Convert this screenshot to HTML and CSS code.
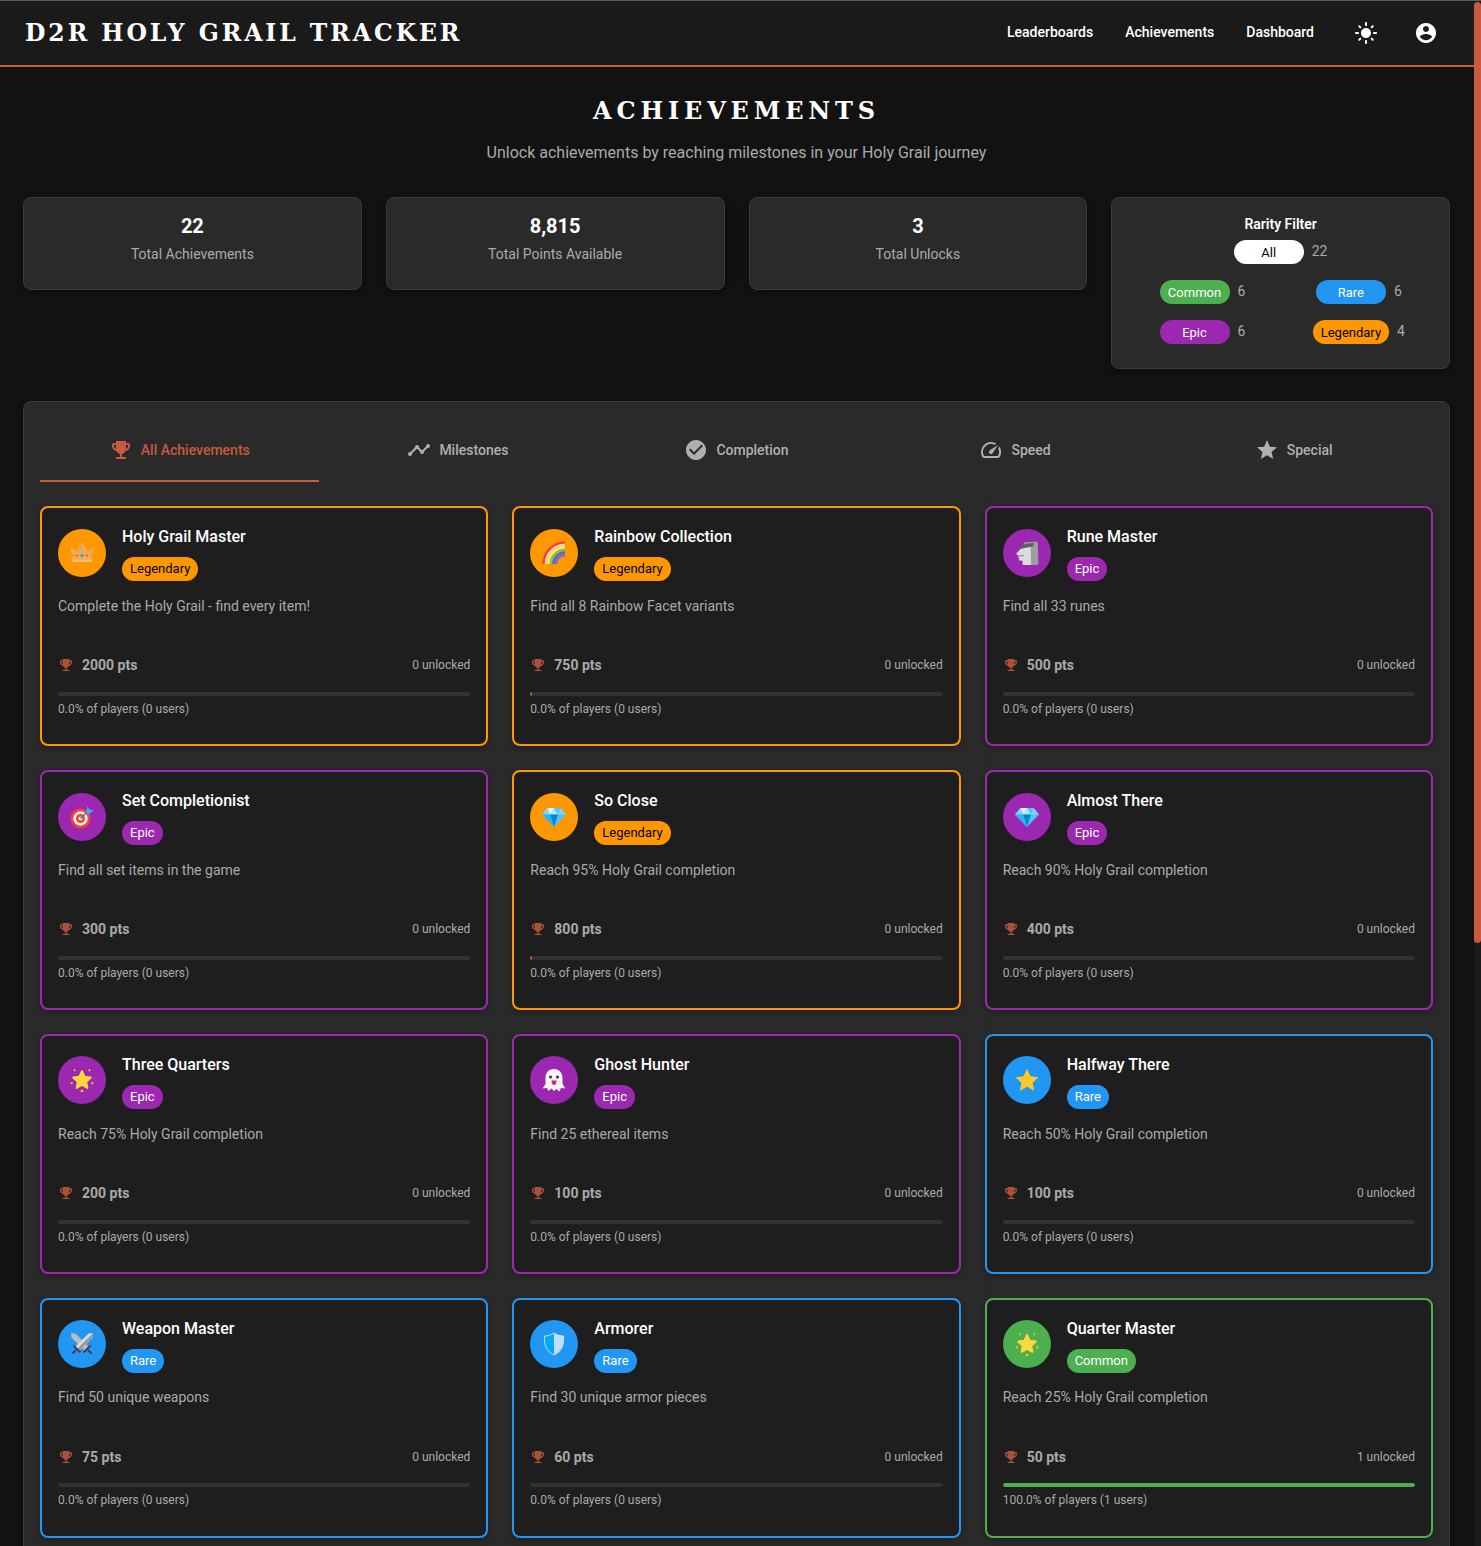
FILE: index.html
```html
<!DOCTYPE html>
<html lang="en">
<head>
<meta charset="utf-8">
<title>Achievements - D2R Holy Grail Tracker</title>
<link rel="stylesheet" href="styles.css">
</head>
<body>
<svg class="defs" width="0" height="0" aria-hidden="true">
  <symbol id="i-trophy" viewBox="0 0 24 24"><path fill="currentColor" d="M19 5h-2V3H7v2H5c-1.1 0-2 .9-2 2v1c0 2.55 1.92 4.63 4.39 4.94.63 1.5 1.98 2.63 3.61 2.96V19H7v2h10v-2h-4v-3.1c1.63-.33 2.98-1.46 3.61-2.96C19.08 12.63 21 10.55 21 8V7c0-1.1-.9-2-2-2zM5 8V7h2v3.82C5.84 10.4 5 9.3 5 8zm14 0c0 1.3-.84 2.4-2 2.82V7h2v1z"/></symbol>
  <symbol id="i-timeline" viewBox="0 0 24 24"><path fill="currentColor" d="M23 8c0 1.1-.9 2-2 2-.18 0-.35-.02-.51-.07l-3.56 3.55c.05.16.07.34.07.52 0 1.1-.9 2-2 2s-2-.9-2-2c0-.18.02-.36.07-.52l-2.55-2.55c-.16.05-.34.07-.52.07s-.36-.02-.52-.07l-4.55 4.56c.05.16.07.33.07.51 0 1.1-.9 2-2 2s-2-.9-2-2 .9-2 2-2c.18 0 .35.02.51.07l4.56-4.55C8.02 9.36 8 9.18 8 9c0-1.1.9-2 2-2s2 .9 2 2c0 .18-.02.36-.07.52l2.55 2.55c.16-.05.34-.07.52-.07s.36.02.52.07l3.55-3.56C19.02 8.35 19 8.18 19 8c0-1.1.9-2 2-2s2 .9 2 2z"/></symbol>
  <symbol id="i-check" viewBox="0 0 24 24"><path fill="currentColor" d="M12 2C6.48 2 2 6.48 2 12s4.48 10 10 10 10-4.48 10-10S17.52 2 12 2zm-2 15l-5-5 1.41-1.41L10 14.17l7.59-7.59L19 8l-9 9z"/></symbol>
  <symbol id="i-speed" viewBox="0 0 24 24"><path fill="currentColor" d="m20.38 8.57-1.23 1.85a8 8 0 0 1-.22 7.58H5.07A8 8 0 0 1 15.58 6.85l1.85-1.23A10 10 0 0 0 3.35 19a2 2 0 0 0 1.72 1h13.85a2 2 0 0 0 1.74-1 10 10 0 0 0-.27-10.44zm-9.79 6.84a2 2 0 0 0 2.83 0l5.66-8.49-8.49 5.66a2 2 0 0 0 0 2.83z"/></symbol>
  <symbol id="i-star" viewBox="0 0 24 24"><path fill="currentColor" d="M12 17.27L18.18 21l-1.64-7.03L22 9.24l-7.19-.61L12 2 9.19 8.63 2 9.24l5.46 4.73L5.82 21z"/></symbol>
  <symbol id="i-account" viewBox="0 0 24 24"><path fill="currentColor" d="M12 2C6.48 2 2 6.48 2 12s4.48 10 10 10 10-4.48 10-10S17.52 2 12 2zm0 3c1.66 0 3 1.34 3 3s-1.34 3-3 3-3-1.34-3-3 1.34-3 3-3zm0 14.2c-2.5 0-4.71-1.28-6-3.22.03-1.99 4-3.08 6-3.08 1.99 0 5.97 1.09 6 3.08-1.29 1.94-3.5 3.22-6 3.22z"/></symbol>
  <symbol id="i-sun" viewBox="0 0 24 24"><path fill="currentColor" d="M12 7c-2.76 0-5 2.24-5 5s2.24 5 5 5 5-2.24 5-5-2.24-5-5-5zM2 13h2c.55 0 1-.45 1-1s-.45-1-1-1H2c-.55 0-1 .45-1 1s.45 1 1 1zm18 0h2c.55 0 1-.45 1-1s-.45-1-1-1h-2c-.55 0-1 .45-1 1s.45 1 1 1zM11 2v2c0 .55.45 1 1 1s1-.45 1-1V2c0-.55-.45-1-1-1s-1 .45-1 1zm0 18v2c0 .55.45 1 1 1s1-.45 1-1v-2c0-.55-.45-1-1-1s-1 .45-1 1zM5.99 4.58c-.39-.39-1.03-.39-1.41 0-.39.39-.39 1.03 0 1.41l1.06 1.06c.39.39 1.03.39 1.41 0s.39-1.03 0-1.41L5.99 4.58zm12.37 12.37c-.39-.39-1.03-.39-1.41 0-.39.39-.39 1.03 0 1.41l1.06 1.06c.39.39 1.03.39 1.41 0 .39-.39.39-1.03 0-1.41l-1.06-1.06zm1.06-10.96c.39-.39.39-1.03 0-1.41-.39-.39-1.03-.39-1.41 0l-1.06 1.06c-.39.39-.39 1.03 0 1.41s1.03.39 1.41 0l1.06-1.06zM7.05 18.36c.39-.39.39-1.03 0-1.41-.39-.39-1.03-.39-1.41 0l-1.06 1.06c-.39.39-.39 1.03 0 1.41s1.03.39 1.41 0l1.06-1.06z"/></symbol>

  <symbol id="e-crown" viewBox="0 0 24 24">
    <path fill="#f7ab4e" d="M.5 5.500 6 10.500 12 1.500 18 10.500 23.500 5.500 21.500 21H2.500z"/>
    <path fill="#dfa06c" d="M6 10.500 12 1.500 14 10.500z M18 10.500 23.500 5.500 21.800 12z" opacity=".7"/>
    <rect x="2.300" y="18.800" width="19.400" height="2.200" fill="#f9bf6a"/>
    <circle cx="12" cy="14.500" r="1.800" fill="#29a9e8"/>
    <circle cx="7" cy="14.500" r="1.100" fill="#e8505b"/><circle cx="17" cy="14.500" r="1.100" fill="#e8505b"/>
    <circle cx="3" cy="14.500" r=".8" fill="#29a9e8"/><circle cx="21" cy="14.500" r=".8" fill="#29a9e8"/>
  </symbol>
  <symbol id="e-rainbow" viewBox="0 0 24 24">
    <g fill="none" stroke-width="2.500">
      <path stroke="#ef4444" d="M1.500 23A21.500 21.500 0 0 1 23 1.500"/>
      <path stroke="#fcd6a0" d="M4 23A19 19 0 0 1 23 4"/>
      <path stroke="#ffe36e" d="M6.500 23A16.500 16.500 0 0 1 23 6.500"/>
      <path stroke="#7ac74f" d="M9 23A14 14 0 0 1 23 9"/>
      <path stroke="#5c6bc0" d="M11.500 23A11.500 11.500 0 0 1 23 11.500"/>
      <path stroke="#7e6bd0" d="M14 23A9 9 0 0 1 23 14"/>
    </g>
  </symbol>
  <symbol id="e-moai" viewBox="0 0 24 24">
    <path fill="#9e9e9e" d="M9 1.500 20.500.5c1.500 0 2.200.8 2.300 2.200L23.500 22c0 1.300-.7 2-2 2H12z"/>
    <path fill="#dcdcdc" d="M6.500 4 15.500 3 16 24H7.500v-4.200l-4-.5 1-2-2-1.300 1.500-1L1 13l4.500-5z"/>
    <path fill="#8a8a8a" d="M3.500 14.500 9 14v1l-5.500.5z"/>
    <path fill="#5e5e5e" d="M6 3.800 18.500 1.800v3.400L4.800 8z"/>
  </symbol>
  <symbol id="e-dart" viewBox="0 0 24 24">
    <circle cx="10.500" cy="13.500" r="10" fill="#f44336"/>
    <circle cx="10.500" cy="13.500" r="7.200" fill="#f5f5f5"/>
    <circle cx="10.500" cy="13.500" r="4.500" fill="#f44336"/>
    <circle cx="10.500" cy="13.500" r="2" fill="#f5f5f5"/>
    <path stroke="#546e7a" stroke-width="1.200" d="M10.500 13.500 18 6"/>
    <path fill="#42a5f5" d="M16 7.500 17.500 1l2 3.500L24 5.500 18 9.500z"/>
  </symbol>
  <symbol id="e-gem" viewBox="0 0 24 24">
    <path fill="#4fc3f7" d="M5.500 3h13L24 9.500 12 22 0 9.500z"/>
    <path fill="#b3e5fc" d="M8 9.500h8L12 3z"/>
    <path fill="#81d4fa" d="M0 9.500 5.500 3 8 9.500z M24 9.500 18.500 3 16 9.500z"/>
    <path fill="#0288d1" d="M8 9.500h8L12 22z"/>
    <path fill="#29b6f6" d="M0 9.500h8L12 22z"/>
    <path fill="#e1f5fe" d="M5.500 3H12L8 9.500z"/>
  </symbol>
  <symbol id="e-glow" viewBox="0 0 24 24">
    <path fill="#ffd83b" stroke="#ffd83b" stroke-width="1.800" stroke-linejoin="round" d="M12 3l2.700 5.700 6.200.800-4.600 4.300 1.200 6.200L12 17l-5.500 3 1.200-6.200-4.600-4.300 6.200-.800z"/>
    <path fill="#fbc02d" d="M3.500 1l2.500.800L4.500 4z M20.500 1 18 1.800 19.500 4z M0 14.500l2.800-.500-.6 3z M24 14.500 21.200 14l.6 3z M12 21l1.800 3h-3.600z"/>
  </symbol>
  <symbol id="e-ghost" viewBox="0 0 24 24">
    <path fill="#f5f5f5" d="M12 1c5.500 0 8.500 4 8.500 9v6l3 4.500-4.500-.5-1.500 3.500-3-2.500L12 23l-2.500-2.500-3 2.500L5 20l-4.500.500L3.500 16v-6C3.500 5 6.500 1 12 1z"/>
    <circle cx="8.500" cy="9" r="1.500" fill="#333"/><circle cx="15.500" cy="9" r="1.500" fill="#333"/>
    <path fill="#e91e63" d="M9.500 12.500h5c0 3-1 4.500-2.500 4.500s-2.500-1.500-2.500-4.500z"/>
  </symbol>
  <symbol id="e-star" viewBox="0 0 24 24">
    <path fill="#ffca28" d="M12 .8l3.500 7.400 8 1-5.900 5.500 1.600 8L12 18.700l-7.200 4 1.600-8L.5 9.200l8-1z"/>
  </symbol>
  <symbol id="e-swords" viewBox="0 0 24 24">
    <path fill="#bdbdbd" d="M1 1 5.500 1.500 19 15l-4 4L1.500 5.500z"/>
    <path fill="#dcdcdc" d="M23 1 18.500 1.500 5 15l4 4L22.500 5.500z"/>
    <path fill="#9a9a9a" d="M23 1 7 17l2 2L22.500 5.500z"/>
    <path fill="none" stroke="#4a3566" stroke-width="1.800" d="M3.500 13.500 10.500 20.500 M20.500 13.500 13.500 20.500 M6 18 2.500 21.500 M18 18 21.500 21.500"/>
  </symbol>
  <symbol id="e-shield" viewBox="0 0 24 24">
    <path fill="#bbdefb" d="M12 1c2.500 2 6 3 9.500 3 .5 8-1 15-9.500 19z"/>
    <path fill="#03a9f4" d="M12 1C9.500 3 6 4 2.500 4 2 12 3.500 19 12 23z"/>
    <path fill="none" stroke="#e3f2fd" stroke-width=".8" d="M12 1c2.500 2 6 3 9.500 3 .5 8-1 15-9.500 19C3.500 19 2 12 2.500 4 6 4 9.500 3 12 1z"/>
  </symbol>
</svg>

<div class="window">
  <div class="page">
    <header class="topbar">
      <div class="logo">D2R Holy Grail Tracker</div>
      <nav class="nav">
        <a class="nav-link">Leaderboards</a>
        <a class="nav-link">Achievements</a>
        <a class="nav-link">Dashboard</a>
        <svg class="nav-icon nav-icon-sun"><use href="#i-sun"/></svg>
        <svg class="nav-icon nav-icon-user"><use href="#i-account"/></svg>
      </nav>
    </header>

    <main class="content">
      <h1 class="page-title">Achievements</h1>
      <p class="page-sub">Unlock achievements by reaching milestones in your Holy Grail journey</p>

      <section class="stats">
        <div class="box stat"><div class="stat-num">22</div><div class="stat-label">Total Achievements</div></div>
        <div class="box stat"><div class="stat-num">8,815</div><div class="stat-label">Total Points Available</div></div>
        <div class="box stat"><div class="stat-num">3</div><div class="stat-label">Total Unlocks</div></div>
        <div class="box filter">
          <div class="filter-title">Rarity Filter</div>
          <div class="filter-all"><span class="pill pill-all">All</span><span class="count">22</span></div>
          <div class="filter-grid">
            <div class="filter-item"><span class="pill common">Common</span><span class="count">6</span></div>
            <div class="filter-item"><span class="pill rare">Rare</span><span class="count">6</span></div>
            <div class="filter-item"><span class="pill epic">Epic</span><span class="count">6</span></div>
            <div class="filter-item"><span class="pill legendary">Legendary</span><span class="count">4</span></div>
          </div>
        </div>
      </section>

      <section class="box panel">
        <div class="tabs">
          <div class="tab active"><svg class="tab-icon"><use href="#i-trophy"/></svg>All Achievements</div>
          <div class="tab"><svg class="tab-icon"><use href="#i-timeline"/></svg>Milestones</div>
          <div class="tab"><svg class="tab-icon"><use href="#i-check"/></svg>Completion</div>
          <div class="tab"><svg class="tab-icon"><use href="#i-speed"/></svg>Speed</div>
          <div class="tab"><svg class="tab-icon"><use href="#i-star"/></svg>Special</div>
        </div>

        <div class="cards">
          <article class="card b-legendary">
            <div class="card-head"><div class="medal legendary"><svg class="emoji"><use href="#e-crown"/></svg></div><div><div class="card-title">Holy Grail Master</div><span class="chip legendary">Legendary</span></div></div>
            <p class="card-desc">Complete the Holy Grail - find every item!</p>
            <div class="card-meta"><span class="pts"><svg class="pts-icon"><use href="#i-trophy"/></svg>2000 pts</span><span class="small">0 unlocked</span></div>
            <div class="bar"></div>
            <div class="small players">0.0% of players (0 users)</div>
          </article>
          <article class="card b-legendary">
            <div class="card-head"><div class="medal legendary"><svg class="emoji"><use href="#e-rainbow"/></svg></div><div><div class="card-title">Rainbow Collection</div><span class="chip legendary">Legendary</span></div></div>
            <p class="card-desc">Find all 8 Rainbow Facet variants</p>
            <div class="card-meta"><span class="pts"><svg class="pts-icon"><use href="#i-trophy"/></svg>750 pts</span><span class="small">0 unlocked</span></div>
            <div class="bar"><div class="bar-fill f-accent" style="width:0.5%"></div></div>
            <div class="small players">0.0% of players (0 users)</div>
          </article>
          <article class="card b-epic">
            <div class="card-head"><div class="medal epic"><svg class="emoji"><use href="#e-moai"/></svg></div><div><div class="card-title">Rune Master</div><span class="chip epic">Epic</span></div></div>
            <p class="card-desc">Find all 33 runes</p>
            <div class="card-meta"><span class="pts"><svg class="pts-icon"><use href="#i-trophy"/></svg>500 pts</span><span class="small">0 unlocked</span></div>
            <div class="bar"></div>
            <div class="small players">0.0% of players (0 users)</div>
          </article>

          <article class="card b-epic">
            <div class="card-head"><div class="medal epic"><svg class="emoji"><use href="#e-dart"/></svg></div><div><div class="card-title">Set Completionist</div><span class="chip epic">Epic</span></div></div>
            <p class="card-desc">Find all set items in the game</p>
            <div class="card-meta"><span class="pts"><svg class="pts-icon"><use href="#i-trophy"/></svg>300 pts</span><span class="small">0 unlocked</span></div>
            <div class="bar"></div>
            <div class="small players">0.0% of players (0 users)</div>
          </article>
          <article class="card b-legendary">
            <div class="card-head"><div class="medal legendary"><svg class="emoji"><use href="#e-gem"/></svg></div><div><div class="card-title">So Close</div><span class="chip legendary">Legendary</span></div></div>
            <p class="card-desc">Reach 95% Holy Grail completion</p>
            <div class="card-meta"><span class="pts"><svg class="pts-icon"><use href="#i-trophy"/></svg>800 pts</span><span class="small">0 unlocked</span></div>
            <div class="bar"><div class="bar-fill f-accent" style="width:0.5%"></div></div>
            <div class="small players">0.0% of players (0 users)</div>
          </article>
          <article class="card b-epic">
            <div class="card-head"><div class="medal epic"><svg class="emoji"><use href="#e-gem"/></svg></div><div><div class="card-title">Almost There</div><span class="chip epic">Epic</span></div></div>
            <p class="card-desc">Reach 90% Holy Grail completion</p>
            <div class="card-meta"><span class="pts"><svg class="pts-icon"><use href="#i-trophy"/></svg>400 pts</span><span class="small">0 unlocked</span></div>
            <div class="bar"></div>
            <div class="small players">0.0% of players (0 users)</div>
          </article>

          <article class="card b-epic">
            <div class="card-head"><div class="medal epic"><svg class="emoji"><use href="#e-glow"/></svg></div><div><div class="card-title">Three Quarters</div><span class="chip epic">Epic</span></div></div>
            <p class="card-desc">Reach 75% Holy Grail completion</p>
            <div class="card-meta"><span class="pts"><svg class="pts-icon"><use href="#i-trophy"/></svg>200 pts</span><span class="small">0 unlocked</span></div>
            <div class="bar"></div>
            <div class="small players">0.0% of players (0 users)</div>
          </article>
          <article class="card b-epic">
            <div class="card-head"><div class="medal epic"><svg class="emoji"><use href="#e-ghost"/></svg></div><div><div class="card-title">Ghost Hunter</div><span class="chip epic">Epic</span></div></div>
            <p class="card-desc">Find 25 ethereal items</p>
            <div class="card-meta"><span class="pts"><svg class="pts-icon"><use href="#i-trophy"/></svg>100 pts</span><span class="small">0 unlocked</span></div>
            <div class="bar"></div>
            <div class="small players">0.0% of players (0 users)</div>
          </article>
          <article class="card b-rare">
            <div class="card-head"><div class="medal rare"><svg class="emoji"><use href="#e-star"/></svg></div><div><div class="card-title">Halfway There</div><span class="chip rare">Rare</span></div></div>
            <p class="card-desc">Reach 50% Holy Grail completion</p>
            <div class="card-meta"><span class="pts"><svg class="pts-icon"><use href="#i-trophy"/></svg>100 pts</span><span class="small">0 unlocked</span></div>
            <div class="bar"></div>
            <div class="small players">0.0% of players (0 users)</div>
          </article>

          <article class="card b-rare">
            <div class="card-head"><div class="medal rare"><svg class="emoji"><use href="#e-swords"/></svg></div><div><div class="card-title">Weapon Master</div><span class="chip rare">Rare</span></div></div>
            <p class="card-desc">Find 50 unique weapons</p>
            <div class="card-meta"><span class="pts"><svg class="pts-icon"><use href="#i-trophy"/></svg>75 pts</span><span class="small">0 unlocked</span></div>
            <div class="bar"></div>
            <div class="small players">0.0% of players (0 users)</div>
          </article>
          <article class="card b-rare">
            <div class="card-head"><div class="medal rare"><svg class="emoji"><use href="#e-shield"/></svg></div><div><div class="card-title">Armorer</div><span class="chip rare">Rare</span></div></div>
            <p class="card-desc">Find 30 unique armor pieces</p>
            <div class="card-meta"><span class="pts"><svg class="pts-icon"><use href="#i-trophy"/></svg>60 pts</span><span class="small">0 unlocked</span></div>
            <div class="bar"></div>
            <div class="small players">0.0% of players (0 users)</div>
          </article>
          <article class="card b-common">
            <div class="card-head"><div class="medal common"><svg class="emoji"><use href="#e-glow"/></svg></div><div><div class="card-title">Quarter Master</div><span class="chip common">Common</span></div></div>
            <p class="card-desc">Reach 25% Holy Grail completion</p>
            <div class="card-meta"><span class="pts"><svg class="pts-icon"><use href="#i-trophy"/></svg>50 pts</span><span class="small">1 unlocked</span></div>
            <div class="bar"><div class="bar-fill f-common" style="width:100%"></div></div>
            <div class="small players">100.0% of players (1 users)</div>
          </article>
        </div>
      </section>
    </main>
  </div>
  <aside class="scrollbar"><div class="scroll-thumb"></div></aside>
</div>
</body>
</html>
```

FILE: styles.css
```css
* { box-sizing: border-box; }
html, body { margin: 0; height: 100%; overflow: hidden; }
body {
  background: #121212;
  color: #fff;
  font-family: Roboto, "Liberation Sans", sans-serif;
  font-size: 14px;
}
.defs { display: block; }
.window { display: flex; height: 100%; border-top: 1px solid #5a5a5a; }
.page { flex: 1; min-width: 0; height: 100%; overflow: hidden; }
.scrollbar { width: 7px; flex: none; background: #1a1a1a; }
.scroll-thumb { height: 941px; margin-top: 1px; background: #c75b3f; border-radius: 4px; }

.topbar {
  display: flex;
  align-items: center;
  justify-content: space-between;
  height: 66px;
  padding: 0 36px 3px 25px;
  background: #1a1a1a;
  border-bottom: 2px solid #c75b3f;
}
.logo {
  margin-top: 4px;
  font-family: "DejaVu Serif", "Liberation Serif", serif;
  font-weight: 700;
  font-size: 23.500px;
  line-height: 1;
  letter-spacing: 2.950px;
  text-transform: uppercase;
  white-space: nowrap;
}
.nav { display: flex; align-items: center; }
.nav-link { font-size: 14px; font-weight: 500; line-height: 20px; margin-left: 32px; }
.nav-icon { width: 24px; height: 24px; color: #fff; margin-top: 2px; }
.nav-icon-sun { margin-left: 40px; }
.nav-icon-user { margin-left: 36px; }

.content { width: 1427px; margin-left: 23px; }
.page-title {
  margin: 29px 0 0;
  height: 30px;
  text-align: center;
  font-family: "DejaVu Serif", "Liberation Serif", serif;
  font-size: 24px;
  line-height: 30px;
  font-weight: 700;
  letter-spacing: 4.850px;
  text-transform: uppercase;
}
.page-sub {
  margin: 15.400px 0 0;
  text-align: center;
  font-size: 16px;
  line-height: 24px;
  color: #aaa;
}

.box {
  background: #2a2a2a;
  border: 1px solid #3a3a3a;
  border-radius: 8px;
  box-shadow: 0 2px 6px rgba(0, 0, 0, .3);
}
.stats {
  display: grid;
  grid-template-columns: repeat(4, 1fr);
  gap: 24px;
  align-items: start;
  margin-top: 32px;
}
.stat { height: 93px; padding: 16px; text-align: center; }
.stat-num { font-size: 20px; font-weight: 700; line-height: 24px; margin-bottom: 6px; }
.stat-label { font-size: 14px; line-height: 20px; color: #aaa; }

.filter { padding: 16px 16px 24px; text-align: center; }
.filter-title { font-size: 14px; font-weight: 600; line-height: 20px; margin-bottom: 6px; }
.filter-all { display: flex; justify-content: center; margin-bottom: 16px; }
.filter-grid { display: grid; grid-template-columns: 1fr 1fr; gap: 16px 8px; }
.filter-item { display: flex; justify-content: center; }
.pill {
  display: block;
  min-width: 70px;
  height: 24px;
  padding: 0 8px;
  border-radius: 12px;
  font-size: 13px;
  line-height: 25px;
  text-align: center;
}
.pill-all { background: #fff; color: #000; }
.count { margin-left: 8px; font-size: 14px; line-height: 22px; color: #aaa; }

.common { background: #4caf50; color: #fff; }
.rare { background: #2196f3; color: #fff; }
.epic { background: #9c27b0; color: #fff; }
.legendary { background: #ff9800; color: #000; }

.panel { margin-top: 32px; padding: 16px; height: 1400px; }
.tabs { display: flex; height: 64px; margin-bottom: 24px; }
.tab {
  flex: 1;
  display: flex;
  align-items: center;
  justify-content: center;
  gap: 8px;
  font-size: 14px;
  font-weight: 500;
  color: #b0b0b0;
}
.tab.active { color: #c75b3f; border-bottom: 2px solid #c75b3f; padding-top: 2px; }
.tab-icon { width: 24px; height: 24px; }

.cards { display: grid; grid-template-columns: repeat(3, 1fr); gap: 24px; }
.card {
  height: 239.800px;
  padding: 16px 16px 24px;
  background: #1e1e1e;
  border: 2px solid;
  border-radius: 8px;
  box-shadow: 0 2px 6px rgba(0, 0, 0, .25);
}
.b-common { border-color: #4caf50; }
.b-rare { border-color: #2196f3; }
.b-epic { border-color: #9c27b0; }
.b-legendary { border-color: #ff9800; }

.card-head { display: flex; align-items: center; gap: 16px; margin-bottom: 14.600px; }
.medal {
  flex: none;
  display: flex;
  align-items: center;
  justify-content: center;
  width: 48px;
  height: 48px;
  border-radius: 50%;
}
.emoji { width: 24px; height: 24px; }
.card-title { font-size: 16px; font-weight: 500; line-height: 25.600px; margin-bottom: 7.400px; }
.chip {
  display: block;
  width: fit-content;
  height: 24px;
  padding: 0 8px;
  border-radius: 12px;
  font-size: 13px;
  line-height: 24px;
}
.card-desc { margin: 0 0 17.500px; height: 40px; font-size: 14px; line-height: 20px; color: #aaa; }
.card-meta {
  display: flex;
  align-items: center;
  justify-content: space-between;
  height: 24px;
  margin-bottom: 14.500px;
}
.pts { display: flex; align-items: center; gap: 8px; font-size: 14px; font-weight: 700; color: #aaa; }
.pts-icon { width: 16px; height: 16px; color: #c75b3f; opacity: .85; }
.small { font-size: 12px; line-height: 20px; color: #aaa; }
.bar { height: 4px; border-radius: 2px; background: #333; overflow: hidden; }
.bar-fill { height: 100%; border-radius: 2px; }
.f-accent { background: #c75b3f; }
.f-common { background: #4caf50; }
.players { margin-top: 3px; }
```
